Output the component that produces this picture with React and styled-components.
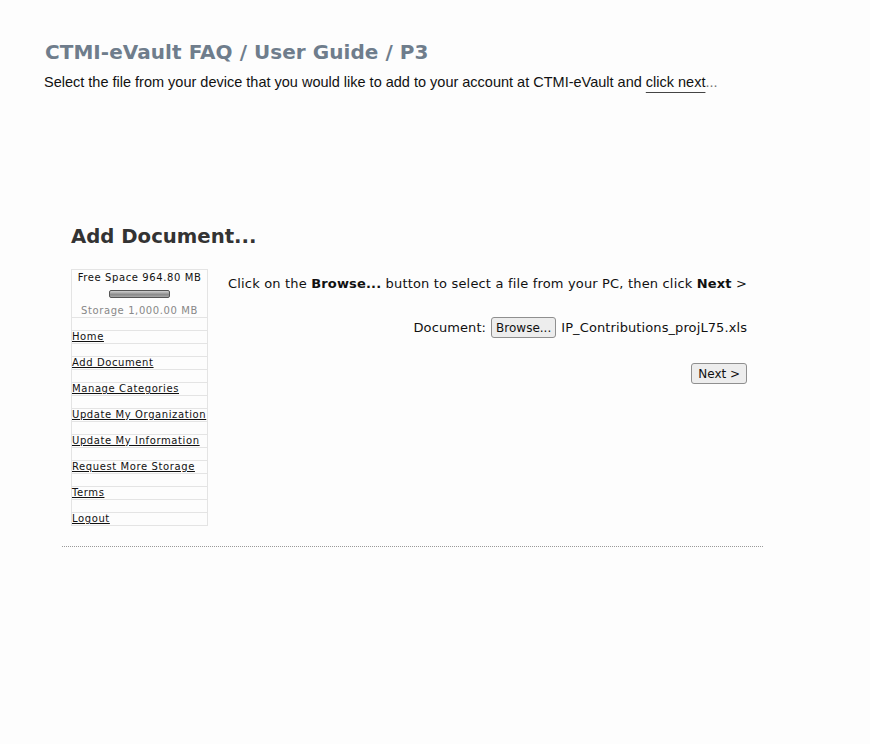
import React from 'react';
import styled, { createGlobalStyle } from 'styled-components';

const GlobalStyle = createGlobalStyle`
  html, body {
    margin: 0;
    padding: 0;
    background: #fdfdfd;
  }
  body {
    font-family: "DejaVu Sans", Verdana, sans-serif;
    color: #222;
  }
`;

const Page = styled.div`
  width: 870px;
  min-height: 744px;
  padding: 41px 0 0 44px;
  box-sizing: border-box;
`;

const Title = styled.h1`
  margin: 0 0 0 1px;
  font-family: "DejaVu Sans", Verdana, sans-serif;
  font-weight: bold;
  font-size: 20px;
  line-height: 22px;
  letter-spacing: 0.05px;
  color: #6f7d8c;
`;

const Intro = styled.p`
  margin: 10px 0 0;
  font-family: "Liberation Sans", Arial, sans-serif;
  font-size: 14.5px;
  line-height: 18px;
  color: #111;
`;

const NextLink = styled.span`
  text-decoration: underline;
  text-underline-offset: 5px;
  text-decoration-color: #444;
`;

const Dots = styled.span`
  color: #777;
`;

const Panel = styled.div`
  width: 701px;
  margin: 134px 0 0 18px;
  border-bottom: 1px dotted #9a9a9a;
  padding-bottom: 20px;
`;

const Heading = styled.h2`
  margin: 0 0 0 9px;
  font-size: 19.7px;
  line-height: 24px;
  font-weight: bold;
  color: #333;
`;

const Body = styled.div`
  display: flex;
  align-items: flex-start;
  margin: 20px 0 0 9px;
`;

const Sidebar = styled.div`
  width: 135px;
  border: 1px solid #e4e4e4;
  border-bottom: none;
  font-size: 10px;
  letter-spacing: 0.6px;
  flex-shrink: 0;
`;

const Quota = styled.div`
  display: flex;
  flex-direction: column;
  align-items: center;
  padding: 1px 0 0;
  height: 48px;
  border-bottom: 1px solid #e4e4e4;
  box-sizing: border-box;
`;

const QuotaLine = styled.div`
  color: ${(p) => (p.$muted ? '#888' : '#111')};
  line-height: 13px;
  white-space: nowrap;
`;

const Bar = styled.div`
  width: 59px;
  height: 6px;
  margin: 6px 0;
  border: 1px solid #555;
  border-radius: 2px;
  background: linear-gradient(#cfcfcf, #8a8a8a 60%, #a8a8a8);
`;

const Row = styled.div`
  height: 13px;
  box-sizing: border-box;
  border-bottom: 1px solid #e4e4e4;
  line-height: 12px;
  white-space: nowrap;
`;

const NavLink = styled.a`
  color: #111;
  text-decoration: underline;
  cursor: pointer;
`;

const Main = styled.div`
  flex: 1;
  padding: 7px 16px 0 20px;
  display: flex;
  flex-direction: column;
  align-items: flex-end;
  font-size: 13px;
  color: #111;
`;

const Lead = styled.div`
  align-self: stretch;
  line-height: 16px;
  letter-spacing: 0.17px;
  white-space: nowrap;
`;

const FileRow = styled.div`
  display: flex;
  align-items: center;
  gap: 5px;
  margin-top: 25px;
  line-height: 16px;
  letter-spacing: 0.1px;
`;

const Button = styled.button`
  font-family: "DejaVu Sans", Verdana, sans-serif;
  font-size: 12px;
  color: #111;
  background: #ededed;
  border: 1px solid #8f8f8f;
  border-radius: 3px;
  height: 21px;
  padding: 0 4px;
  cursor: pointer;
`;

const NextButton = styled(Button)`
  margin-top: 25px;
  padding: 0 6px;
`;

const links = [
  'Home',
  'Add Document',
  'Manage Categories',
  'Update My Organization',
  'Update My Information',
  'Request More Storage',
  'Terms',
  'Logout',
];

export default function App() {
  return (
    <Page>
      <GlobalStyle />
      <Title>CTMI-eVault FAQ / User Guide / P3</Title>
      <Intro>
        Select the file from your device that you would like to add to your account at CTMI-eVault and{' '}
        <NextLink>click next</NextLink>
        <Dots>...</Dots>
      </Intro>

      <Panel>
        <Heading>Add Document...</Heading>
        <Body>
          <Sidebar>
            <Quota>
              <QuotaLine>Free Space 964.80 MB</QuotaLine>
              <Bar />
              <QuotaLine $muted>Storage 1,000.00 MB</QuotaLine>
            </Quota>
            {links.map((label) => (
              <React.Fragment key={label}>
                <Row />
                <Row>
                  <NavLink>{label}</NavLink>
                </Row>
              </React.Fragment>
            ))}
          </Sidebar>
          <Main>
            <Lead>
              Click on the <b>Browse...</b> button to select a file from your PC, then click <b>Next</b> &gt;
            </Lead>
            <FileRow>
              <span>Document:</span>
              <Button>Browse...</Button>
              <span>IP_Contributions_projL75.xls</span>
            </FileRow>
            <NextButton>Next &gt;</NextButton>
          </Main>
        </Body>
      </Panel>
    </Page>
  );
}
